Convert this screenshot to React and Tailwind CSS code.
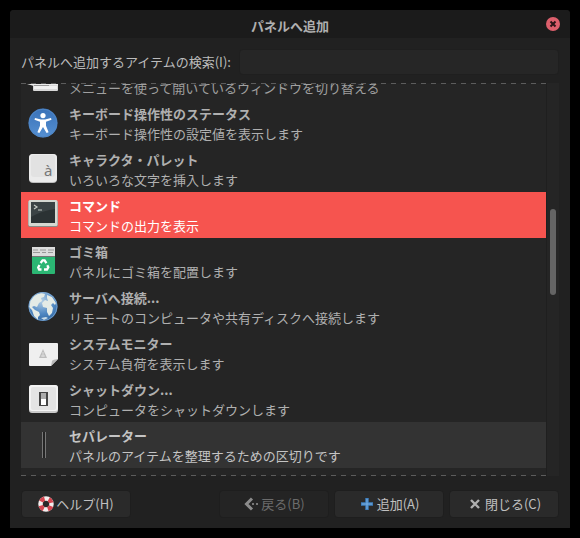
import React from "react";

function MenuIcon() {
  return (
    <svg width="32" height="32" viewBox="0 0 32 32">
      <path d="M0 18h31v2H7z" fill="#eee" />
      <rect x="6" y="19" width="25" height="6" rx="1" fill="#d8d8d8" />
      <path d="M7 20h23v3H7z" fill="#f1f1f1" />
      <path d="M7 19.500h15" stroke="#999" />
    </svg>
  );
}

function AccessIcon() {
  return (
    <svg width="32" height="32" viewBox="0 0 32 32">
      <defs>
        <linearGradient id="accessBlue" x1="0" y1="0" x2="0" y2="1">
          <stop offset="0" stopColor="#3a72b8" />
          <stop offset="1" stopColor="#5590d2" />
        </linearGradient>
      </defs>
      <circle cx="16" cy="16" r="14.500" fill="url(#accessBlue)" />
      <circle cx="16" cy="16" r="13.800" fill="none" stroke="#4f86c6" />
      <circle cx="16" cy="8.600" r="2.600" fill="#fff" />
      <path d="M8 11l6 1.400h4L24 11l.5 1.800-5.500 2v4l2.600 6.400-2 .8L16 20l-3.600 6-2-.8L13 18.800v-4l-5.500-2z" fill="#fff" />
    </svg>
  );
}

function CharacterIcon() {
  return (
    <svg width="32" height="32" viewBox="0 0 32 32">
      <rect x="2" y="1" width="28" height="29" rx="4" fill="#bdbdbd" />
      <rect x="2" y="1" width="28" height="28" rx="4" fill="#ebebeb" />
      <rect x="4" y="2" width="24" height="22" rx="3" fill="#e2e2e2" />
      <text x="17" y="23" fontSize="15" fill="#777" fontFamily="Noto Sans, sans-serif">à</text>
    </svg>
  );
}

function TerminalIcon() {
  return (
    <svg width="32" height="32" viewBox="0 0 32 32">
      <rect x="1" y="2" width="30" height="26" rx="2" fill="#888c88" />
      <rect x="1.500" y="1" width="29" height="26" rx="1.500" fill="#d5d8d2" />
      <rect x="4" y="3" width="24" height="21" fill="#2b3234" />
      <path d="M4 3h24v7Q14 12 4 18z" fill="#3b4345" />
      <path d="M7 6l3 2-3 2M11 11h4" fill="none" stroke="#c5cbc5" strokeWidth="1.200" />
    </svg>
  );
}

function TrashIcon() {
  return (
    <svg width="32" height="32" viewBox="0 0 32 32">
      <rect x="5" y="2" width="23" height="10" fill="#dcdcdc" />
      <path d="M6 5h5M13 5h6M21 5h6M6 7.500h7M15 7.500h4M21 7.500h5" stroke="#999" />
      <path d="M5 11.500h23" stroke="#777" />
      <path d="M5 12h23v16a1 1 0 0 1-1 1H6a1 1 0 0 1-1-1z" fill="#2bb673" />
      <g fill="none" stroke="#fff" strokeWidth="2.300">
        <path d="M13.600 18l2-2.600h2l1.800 2.800" />
        <path d="M20.300 20.200l1 2-1.300 2.300h-3" />
        <path d="M14.500 24.500h-2.400l-.9-2 1.300-2.500" />
      </g>
    </svg>
  );
}

function GlobeIcon() {
  return (
    <svg width="32" height="32" viewBox="0 0 32 32">
      <defs>
        <radialGradient id="globeSea" cx=".45" cy=".3" r=".75">
          <stop offset="0" stopColor="#b4cfe6" />
          <stop offset=".6" stopColor="#5088c2" />
          <stop offset="1" stopColor="#2e649f" />
        </radialGradient>
      </defs>
      <circle cx="16" cy="15.500" r="14.500" fill="url(#globeSea)" />
      <path d="M3 10l5-6 6-2 4 1-1 3-3 1 1 3-3 2-2 4-3-1-2 1 3 3 4 2 1 3-2 2v3l-4-4-2-6-3-3z" fill="#e4ebe6" />
      <path d="M20 4l5 2 4 6-1 2-2-2-2 2 2 3-1 5-3 3-2-4v-4l-4-1-1-4 3-3 3 1-1-3z" fill="#e4ebe6" />
      <path d="M14 27l5-1 2 1-4 2z" fill="#cbdde8" />
      <circle cx="16" cy="15.500" r="14" fill="none" stroke="#86aed4" strokeOpacity=".7" />
    </svg>
  );
}

function MonitorIcon() {
  return (
    <svg width="32" height="32" viewBox="0 0 32 32">
      <path d="M3 6h27a1 1 0 0 1 1 1v15l-7 7H3a1 1 0 0 1-1-1V7a1 1 0 0 1 1-1z" fill="#efefef" />
      <path d="M31 22l-7 7 1-5q.3-1 2-1.300z" fill="#b8b8b8" />
      <path d="M16 12l4 9h-8z" fill="#bcbcbc" />
      <path d="M16 15v5M14 19h4" stroke="#dedede" />
    </svg>
  );
}

function SwitchIcon() {
  return (
    <svg width="32" height="32" viewBox="0 0 32 32">
      <rect x="2" y="2" width="29" height="28" rx="3" fill="#c9c9c9" />
      <rect x="2" y="2" width="29" height="26" rx="3" fill="#f3f3f3" />
      <rect x="4" y="4" width="25" height="23" rx="2" fill="#e4e4e4" />
      <rect x="12" y="9" width="9" height="14" fill="#444" />
      <rect x="14" y="10" width="5" height="6" fill="#aaa" />
      <rect x="14" y="16" width="5" height="6" fill="#fff" />
    </svg>
  );
}

function SeparatorIcon() {
  return (
    <svg width="32" height="32" viewBox="0 0 32 32">
      <path d="M15.500 3v26M18.500 3v26" stroke="#777" />
      <path d="M17 3v26" stroke="#242424" strokeWidth="2" />
    </svg>
  );
}

function HelpIcon() {
  return (
    <svg width="16" height="16" viewBox="0 0 16 16">
      <circle cx="8" cy="8" r="5.500" fill="none" stroke="#f4eeee" strokeWidth="4.500" />
      <circle cx="8" cy="8" r="5.500" fill="none" stroke="#d64550" strokeWidth="4.500" strokeDasharray="4.320 4.320" strokeDashoffset="-2.160" />
    </svg>
  );
}

function BackIcon() {
  return (
    <svg width="16" height="16" viewBox="0 0 16 16">
      <path d="M9 2.500L3.500 8 9 13.500" fill="none" stroke="#8c8c8c" strokeWidth="3" />
      <path d="M9 7h2v2H9zM13 7h2v2h-2z" fill="#777" />
    </svg>
  );
}

function AddIcon() {
  return (
    <svg width="16" height="16" viewBox="0 0 16 16">
      <path d="M8 2v12M2 8h12" stroke="#3f80c0" strokeWidth="3.400" />
      <path d="M8 3v10M3 8h10" stroke="#7ab0e2" strokeWidth="1" />
    </svg>
  );
}

function CloseIcon() {
  return (
    <svg width="16" height="16" viewBox="0 0 16 16">
      <path d="M4 4l8 8M12 4l-8 8" stroke="#b0b0b0" strokeWidth="2.400" />
    </svg>
  );
}

const items = [
  { icon: AccessIcon, name: "キーボード操作性のステータス", text: "キーボード操作性の設定値を表示します" },
  { icon: CharacterIcon, name: "キャラクタ・パレット", text: "いろいろな文字を挿入します" },
  { icon: TerminalIcon, name: "コマンド", text: "コマンドの出力を表示", state: "selected" },
  { icon: TrashIcon, name: "ゴミ箱", text: "パネルにゴミ箱を配置します" },
  { icon: GlobeIcon, name: "サーバへ接続...", text: "リモートのコンピュータや共有ディスクへ接続します" },
  { icon: MonitorIcon, name: "システムモニター", text: "システム負荷を表示します" },
  { icon: SwitchIcon, name: "シャットダウン...", text: "コンピュータをシャットダウンします" },
  { icon: SeparatorIcon, name: "セパレーター", text: "パネルのアイテムを整理するための区切りです", state: "hover" },
];

const rowStyles = {
  selected: "bg-[#f6544f] text-white",
  hover: "bg-[#333333] text-[#c4c4c4]",
  normal: "text-[#b0b0b0]",
};

function Item({ icon: Icon, name, text, state = "normal" }) {
  return (
    <li
      role="option"
      aria-selected={state === "selected"}
      className={`flex h-[46px] shrink-0 items-center gap-[10px] pl-[6px] leading-5 ${rowStyles[state]}`}
    >
      <Icon />
      <div className="whitespace-nowrap pt-[2px]">
        <p className="font-bold">{name}</p>
        <p>{text}</p>
      </div>
    </li>
  );
}

function ActionButton({ icon: Icon, children, disabled = false }) {
  return (
    <button
      type="button"
      disabled={disabled}
      className={`flex h-7 w-[110px] items-center justify-center gap-[2px] rounded-sm border border-[#1e1e1e] leading-5 ${
        disabled ? "bg-[#242424] text-[#6c6c6c]" : "bg-[#2a2a2a] text-[#c0c0c0]"
      }`}
    >
      <Icon />
      <span>{children}</span>
    </button>
  );
}

function Dashes() {
  return (
    <div className="h-px bg-[repeating-linear-gradient(90deg,#5c5c5c_0_5px,#242424_5px_10px)]" />
  );
}

export default function App() {
  return (
    <div className="h-screen bg-black p-[10px] font-['Noto_Sans_CJK_JP',sans-serif] text-[13px] text-[#bcbcbc]">
      <main className="flex h-full flex-col rounded-t-sm bg-[#212121]">
        <header className="flex h-7 shrink-0 items-center rounded-t-sm bg-[#1b1b1b] px-[10px]">
          <span className="w-[14px]" />
          <h1 className="flex-1 pt-1 text-center font-bold leading-5 text-[#b0b0b0]">パネルへ追加</h1>
          <button type="button" aria-label="閉じる" className="size-[14px] rounded-full bg-[#dc5f6c]">
            <svg width="14" height="14" viewBox="0 0 14 14">
              <path d="M4.500 4.500l5 5M9.500 4.500l-5 5" stroke="#2a1416" strokeWidth="2" />
            </svg>
          </button>
        </header>

        <div className="flex shrink-0 items-center gap-2 px-[11px] pb-2 pt-[11px] leading-5">
          <label htmlFor="search" className="whitespace-nowrap">パネルへ追加するアイテムの検索(I):</label>
          <input id="search" type="text" className="h-[26px] min-w-0 flex-1 rounded-sm border border-[#1f1f1f] bg-[#262626] px-2 outline-none" />
        </div>

        <div className="mx-[11px] flex min-h-0 flex-1 bg-[#252525]">
          <div className="flex min-w-0 flex-1 flex-col">
            <Dashes />
            <ul role="listbox" aria-label="アイテム" className="flex min-h-0 flex-1 flex-col overflow-hidden">
              <li className="flex h-4 shrink-0 items-end gap-[10px] overflow-hidden pb-[2px] pl-[6px] leading-5 text-[#a0a0a0]">
                <MenuIcon />
                <p className="whitespace-nowrap">メニューを使って開いているウィンドウを切り替える</p>
              </li>
              {items.map((item) => (
                <Item key={item.name} {...item} />
              ))}
            </ul>
            <Dashes />
          </div>
          <div className="flex w-[13px] flex-col items-center border-l border-[#1f1f1f]">
            <div className="h-[126px]" />
            <div className="h-[86px] w-[6px] rounded-full bg-[#646464]" />
          </div>
        </div>

        <footer className="flex shrink-0 gap-[5px] px-[11px] pb-[10px] pt-[14px]">
          <ActionButton icon={HelpIcon}>ヘルプ(H)</ActionButton>
          <span className="flex-1" />
          <ActionButton icon={BackIcon} disabled>戻る(B)</ActionButton>
          <ActionButton icon={AddIcon}>追加(A)</ActionButton>
          <ActionButton icon={CloseIcon}>閉じる(C)</ActionButton>
        </footer>
      </main>
    </div>
  );
}
